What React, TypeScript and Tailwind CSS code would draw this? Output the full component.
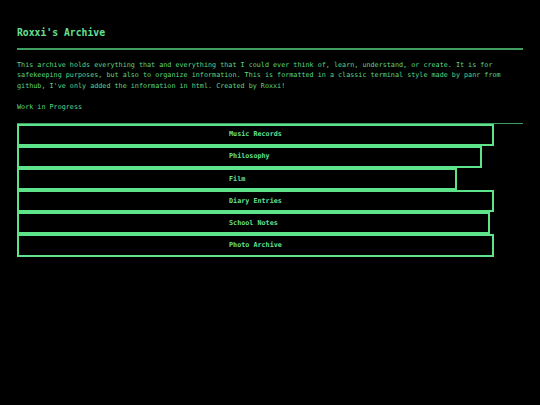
const sections = [
  { label: 'Music Records', width: 'w-[477px]' },
  { label: 'Philosophy', width: 'w-[465px]' },
  { label: 'Film', width: 'w-[440px]' },
  { label: 'Diary Entries', width: 'w-[477px]' },
  { label: 'School Notes', width: 'w-[473px]' },
  { label: 'Photo Archive', width: 'w-[477px]' },
];

export default function App() {
  return (
    <div className="min-h-[405px] w-full bg-black text-[#5cd884] px-[17px] pt-[26px] font-['DejaVu_Sans_Mono',monospace]">
      <h1 className="text-[9.75px] leading-[14px] font-bold text-[#66e090]">Roxxi's Archive</h1>
      <div className="mt-[8px] h-[1.5px] w-[506px] bg-[#3f9e60]" />

      <p className="mt-[10px] text-[6.75px] leading-[10.5px] w-[506px]">
        This archive holds everything that and everything that I could ever think of, learn, understand, or create. It is for safekeeping purposes, but also to organize information. This is formatted in a classic terminal style made by panr from github, I've only added the information in html. Created by Roxxi!
      </p>
      <p className="mt-[11px] text-[6.75px] leading-[10.5px]">Work in Progress</p>

      <div className="mt-[10px] w-[506px] border-t border-[#3f9e60] flex flex-col">
        {sections.map((s) => (
          <button
            key={s.label}
            className={`${s.width} h-[22.2px] border-2 border-[#5ee28a] bg-black text-left pl-[210px] text-[6.75px] font-bold text-[#66e090] leading-none`}
          >
            {s.label}
          </button>
        ))}
      </div>
    </div>
  );
}
